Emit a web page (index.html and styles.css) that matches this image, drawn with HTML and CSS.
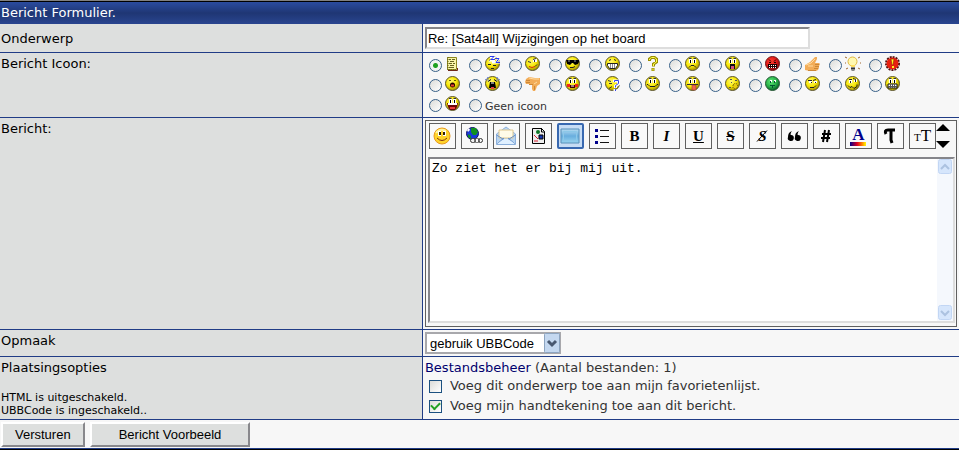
FILE: index.html
```
<!DOCTYPE html>
<html lang="nl">

<head>
    <meta charset="utf-8">
    <meta name="viewport" content="width=device-width, initial-scale=1.0">
    <title>Bericht Formulier</title>
    <link rel="stylesheet" href="styles.css">
</head>

<body>

    <!-- gedeelde vormen voor de smileys -->
    <svg class="defs" aria-hidden="true">
        <defs>
            <radialGradient id="geel" cx="40%" cy="35%" r="65%">
                <stop offset="0" stop-color="#fff870" />
                <stop offset="0.55" stop-color="#f8e808" />
                <stop offset="1" stop-color="#a89400" />
            </radialGradient>
            <radialGradient id="rood" cx="40%" cy="35%" r="65%">
                <stop offset="0" stop-color="#ff4030" />
                <stop offset="0.6" stop-color="#e01818" />
                <stop offset="1" stop-color="#800c10" />
            </radialGradient>
            <radialGradient id="groen" cx="40%" cy="35%" r="65%">
                <stop offset="0" stop-color="#60e878" />
                <stop offset="0.6" stop-color="#28b048" />
                <stop offset="1" stop-color="#086028" />
            </radialGradient>
            <linearGradient id="kleuren">
                <stop offset="0" stop-color="#00008b" />
                <stop offset="0.45" stop-color="#e00020" />
                <stop offset="0.75" stop-color="#ff8000" />
                <stop offset="1" stop-color="#ffff00" />
            </linearGradient>
            <linearGradient id="scherm" x2="0" y2="1">
                <stop offset="0" stop-color="#b8dcf2" />
                <stop offset="0.5" stop-color="#68aede" />
                <stop offset="1" stop-color="#98d4f0" />
            </linearGradient>
            <g id="gezicht">
                <circle cx="7.5" cy="7.5" r="7" fill="url(#geel)" stroke="#5c5630" />
            </g>
            <g id="ogen">
                <path d="M4 3h3v4H4zM8 3h3v4H8z" fill="#fff" />
                <path d="M5 4h1v3H5zM9 4h1v3H9z" fill="#000" />
                <path d="M4 2.5h2.500M8.500 2.500H11" stroke="#333" fill="none" />
            </g>
            <g id="duim">
                <path d="M0 9l5-3 5-5h2v2l-2 4h4l1 1-1 2v2l-1 2-2 1H5l-5-1z" fill="#f2ac58" />
                <path d="M1 9l5-2 4-4M3 10h5" stroke="#ffdca0" fill="none" />
                <path d="M10 8.500h4M10 10.500h4M9 12.500h4M3 14.500h8" stroke="#cc8838" />
            </g>
        </defs>
    </svg>

    <form class="formulier" action="#">
        <h1>Bericht Formulier.</h1>

        <div class="rij">
            <label class="naam midden" for="onderwerp">Onderwerp</label>
            <div class="veld">
                <input type="text" id="onderwerp" class="onderwerp" value="Re: [Sat4all] Wijzigingen op het board">
            </div>
        </div>

        <div class="rij">
            <div class="naam">Bericht Icoon:</div>
            <div class="veld iconen">
                <label><input type="radio" name="icoon" aria-label="Bericht" checked>
                    <svg viewBox="0 0 16 16"><path d="M2.500 1.500h9v12h-9z" fill="#f8f4a8" stroke="#8c8620" /><path d="M3 1v13h9" stroke="#605808" fill="none" stroke-dasharray="1 1" /><path d="M4 3.500h2M7 3.500h3M5 5.500h4M4 7.500h3M8 7.500h2M5 9.500h4M4 11.500h5" stroke="#686420" /><path d="M12.500 12v2.500H3" stroke="#702818" fill="none" /></svg></label>
                <label><input type="radio" name="icoon" aria-label="Slapen">
                    <svg viewBox="0 0 16 16"><use href="#gezicht" /><path d="M3 8.500h3M8 9.500h3M6 12.500h3M4 4.500l2-1" stroke="#222" /><path d="M5 1.500h4L6 4.500h4M10 2.500h4L11 6.500h4M7 6.500h4" fill="none" stroke="#fff" stroke-width="2" /><path d="M5 .5h4L6 3.500h4M10 2.500h4L11 6.500h4" fill="none" stroke="#2838f0" /></svg></label>
                <label><input type="radio" name="icoon" aria-label="Knipoog">
                    <svg viewBox="0 0 16 16"><use href="#gezicht" /><path d="M8 3h4v3H8z" fill="#fff" /><path d="M3 5.500l3 1M8 3.500l3-1M9.500 4v2M10 10.500l2-2" stroke="#333" fill="none" /><path d="M4 10.500l3 1 3-1" stroke="#d03010" fill="none" /></svg></label>
                <label><input type="radio" name="icoon" aria-label="Stoer">
                    <svg viewBox="0 0 16 16"><use href="#gezicht" /><path d="M1 4h13v2l-1 2-3 1-2-2H7L5 9 2 8z" fill="#000" /><path d="M3 5h2M9 5h2" stroke="#999" /><path d="M5 11.500h3l2-1" stroke="#222" fill="none" /></svg></label>
                <label><input type="radio" name="icoon" aria-label="Grijns">
                    <svg viewBox="0 0 16 16"><use href="#gezicht" /><path d="M4 4.500l2-1M9 3.500l2 1" stroke="#222" /><path d="M2.500 7.500h10v2l-2 3h-6l-2-3z" fill="#fff" stroke="#222" /><path d="M5.500 8v4M7.500 8v4M9.500 8v4" stroke="#888" /></svg></label>
                <label><input type="radio" name="icoon" aria-label="Vraag">
                    <svg viewBox="0 0 16 16"><path d="M4.500 5V3l2-1.500h3l2 1.500v3l-3 2v2.500M8 12v3" stroke="#988c00" stroke-width="3" fill="none" /><path d="M4.500 4V3l2-1.500h3l2 1.500v3l-3 2v2M8 12.500v2" stroke="#ffff50" fill="none" /></svg></label>
                <label><input type="radio" name="icoon" aria-label="Droevig">
                    <svg viewBox="0 0 16 16"><use href="#gezicht" /><use href="#ogen" /><path d="M4 11.500l2-2h3l2 2" stroke="#222" fill="none" /></svg></label>
                <label><input type="radio" name="icoon" aria-label="Verbaasd">
                    <svg viewBox="0 0 16 16"><use href="#gezicht" /><use href="#ogen" /><path d="M5 8h5v5H5z" fill="#111" /><path d="M6 10h3v3H6z" fill="#d85080" /></svg></label>
                <label><input type="radio" name="icoon" aria-label="Boos">
                    <svg viewBox="0 0 16 16"><circle cx="7.5" cy="7.5" r="7" fill="url(#rood)" stroke="#701818" /><path d="M4 3.500l2 2M11 3.500l-2 2M4 6.500h2M9 6.500h2" stroke="#200" /><path d="M3 8h9v4H3z" fill="#200" /><path d="M4 9.500h7M4 11.500h7" stroke="#fff" stroke-dasharray="1 1" /></svg></label>
                <label><input type="radio" name="icoon" aria-label="Duim omhoog">
                    <svg viewBox="0 0 16 16"><use href="#duim" /></svg></label>
                <label><input type="radio" name="icoon" aria-label="Idee">
                    <svg viewBox="0 0 16 16"><path d="M0 1l2 1M15 1l-2 1M0 7h1M15 7h1M1 13l2-1M15 13l-2-1" stroke="#a06830" /><circle cx="7.5" cy="5.500" r="4.500" fill="#fff8b0" stroke="#e0b840" /><path d="M6 9h4v2H6z" fill="#ffe060" /><path d="M6 11h4v3l-1 1H7l-1-1z" fill="#888" /><path d="M6 12.500h4" stroke="#333" /></svg></label>
                <label><input type="radio" name="icoon" aria-label="Let op">
                    <svg viewBox="0 0 16 16"><circle cx="7.5" cy="7.5" r="6.500" fill="none" stroke="#501010" stroke-width="2" stroke-dasharray="2 1" /><circle cx="7.5" cy="7.5" r="6" fill="#e82010" /><path d="M6 3h3L8 9H7z" fill="#fff020" stroke="#801000" stroke-width=".5" /><path d="M7 10h2v2H7z" fill="#fff020" /></svg></label>

                <label><input type="radio" name="icoon" aria-label="Oh">
                    <svg viewBox="0 0 16 16"><use href="#gezicht" /><path d="M4 4.500h2M9 4.500h2" stroke="#665c00" /><circle cx="7.5" cy="9" r="2.500" fill="#200" /><path d="M6 9.500h3" stroke="#f04030" stroke-width="2" /></svg></label>
                <label><input type="radio" name="icoon" aria-label="Huilen">
                    <svg viewBox="0 0 16 16"><use href="#gezicht" /><path d="M3 5.500l3-2M12 5.500l-3-2" stroke="#111" /><path d="M5 6h5l1 6H4z" fill="#000" /><path d="M6 7h3" stroke="#fff" /><path d="M6 11h3v2H6z" fill="#e04040" /><path d="M0 4l3-3v5M15 4l-3-3v5" fill="none" stroke="#7088f0" stroke-dasharray="2 1" /></svg></label>
                <label><input type="radio" name="icoon" aria-label="Duim omlaag">
                    <svg viewBox="0 0 16 16"><path d="M1 3l3-2 6 1h5v6l-3 2-1 3-1 2H8l-1-2V9L4 8 1 8 0 6z" fill="#f2ac58" /><path d="M4 2l5 1 5 0M9 8l3-2" stroke="#ffdca0" fill="none" /><path d="M1 4.500h4M1 6.500h4M4 8.500h4M9.500 10v4" stroke="#cc8838" /></svg></label>
                <label><input type="radio" name="icoon" aria-label="Blozen">
                    <svg viewBox="0 0 16 16"><use href="#gezicht" /><use href="#ogen" /><path d="M2 8h3v3H2zM10 8h3v3h-3z" fill="#f02818" /><path d="M5 9h5v3H5z" fill="#400" /><path d="M6 10h3" stroke="#fff" /></svg></label>
                <label><input type="radio" name="icoon" aria-label="Verward">
                    <svg viewBox="0 0 16 16"><use href="#gezicht" /><path d="M3 4.500l3 1M8 5.500h2M4 7.500h3M4 12.500l3-2" stroke="#333" fill="none" /><path d="M9.500 6V5h4v3l-3 2v2M10 13v2" stroke="#fff" stroke-width="3" fill="none" /><path d="M9.500 6V4.500h4v3l-3 2v2M10.500 13v2" stroke="#3848e8" fill="none" /></svg></label>
                <label><input type="radio" name="icoon" aria-label="Glimlach">
                    <svg viewBox="0 0 16 16"><use href="#gezicht" /><use href="#ogen" /><path d="M2 8.500h1l2 2h5l2-2h1" stroke="#222" fill="none" /></svg></label>
                <label><input type="radio" name="icoon" aria-label="Tong">
                    <svg viewBox="0 0 16 16"><use href="#gezicht" /><use href="#ogen" /><path d="M2 8.500h11" stroke="#333" /><path d="M7 9h4v5H7z" fill="#f06850" stroke="#903020" stroke-width=".5" /></svg></label>
                <label><input type="radio" name="icoon" aria-label="Fluisteren">
                    <svg viewBox="0 0 16 16"><use href="#gezicht" /><path d="M5 3.500h2M10 4.500h2M6 6.500h1M4 11.500h2" stroke="#555" /><path d="M8 9l2-2 2 1 1 3-3 2-2-1z" fill="#e8cc10" stroke="#706000" stroke-dasharray="1 1" /></svg></label>
                <label><input type="radio" name="icoon" aria-label="Misselijk">
                    <svg viewBox="0 0 16 16"><circle cx="7.5" cy="7.5" r="7" fill="url(#groen)" stroke="#285838" /><path d="M5 4h2v2H5zM9 4h2v2H9z" fill="#fff" /><path d="M5.500 5v2M9.500 5v2M5 9.500h5M7.500 10v2" stroke="#053" /></svg></label>
                <label><input type="radio" name="icoon" aria-label="Sarcastisch">
                    <svg viewBox="0 0 16 16"><use href="#gezicht" /><path d="M4 5h3v2H4zM9 5h3v2H9z" fill="#fff" /><path d="M3 4.500h4M8 4.500l3-1M6 6.500h1M10 6.500h1M5 11.500h4l2-2" stroke="#222" fill="none" /></svg></label>
                <label><input type="radio" name="icoon" aria-label="Scheef">
                    <svg viewBox="0 0 16 16"><use href="#gezicht" /><path d="M4 4h3v3H4zM9 3h3v3H9z" fill="#fff" /><path d="M4 3.500h3M8 2.500l3 1M5.500 5v2M10.500 4v2M3 9.500l2 2 2-1 2 2 3-2v-2" stroke="#222" fill="none" /></svg></label>
                <label><input type="radio" name="icoon" aria-label="Tanden">
                    <svg viewBox="0 0 16 16"><use href="#gezicht" /><use href="#ogen" /><path d="M3 8h9v4H3z" fill="#fff" stroke="#111" /><path d="M3 10.500h9M5.500 8v4M7.500 8v4M9.500 8v4" stroke="#555" /></svg></label>

                <label><input type="radio" name="icoon" aria-label="Lachen">
                    <svg viewBox="0 0 16 16"><use href="#gezicht" /><use href="#ogen" /><path d="M2 7h11l-1 4-2 3H5L3 11z" fill="#700808" /><path d="M3 8h9" stroke="#fff" stroke-width="2" /><path d="M5 11h5v2H5z" fill="#f04040" /></svg></label>
                <label class="geen"><input type="radio" name="icoon"><span>Geen icoon</span></label>
            </div>
        </div>

        <div class="rij">
            <label class="naam" for="bericht">Bericht:</label>
            <div class="veld">
                <div class="editor">
                    <div class="werkbalk">
                        <button type="button" aria-label="Smiley"><svg viewBox="0 0 20 20"><circle cx="10" cy="10" r="8" fill="#ffd42a" stroke="#e89820" /><path d="M4 7q4-5 10-2" stroke="#fff4a0" stroke-width="2" fill="none" /><path d="M6 5h3v5H6zM11 5h3v5h-3z" fill="#fff" /><path d="M7 6h2v3H7zM11 6h2v3h-2z" fill="#302008" /><path d="M5 12q5 5 10 0" fill="none" stroke="#803010" /></svg></button>
                        <button type="button" aria-label="Link"><svg viewBox="0 0 20 20"><circle cx="8.500" cy="7.500" r="6" fill="#1838d8" stroke="#101060" /><path d="M7 2l5 0 2 4-2 3H9L7 6zM4 8l3 2 0 3-3-2z" fill="#109020" /><path d="M3 4l2-2 1 2-2 2z" fill="#fff" /><rect x="6.500" y="12.500" width="5" height="4" rx="2" fill="#eee" stroke="#333" /><rect x="10.500" y="12.500" width="5" height="4" rx="2" fill="none" stroke="#555" /><rect x="14.500" y="12.500" width="4" height="4" rx="2" fill="none" stroke="#333" /></svg></button>
                        <button type="button" aria-label="E-mail"><svg viewBox="0 0 20 20"><path d="M.5 8L10 1l9.500 7v10.500H.5z" fill="#b8d4f0" stroke="#8cb0dc" /><path d="M3 4h14v8H3z" fill="#fffbe8" stroke="#e0c890" /><path d="M.5 9l8 5h3l8-5M1 18l7-6M19 18l-7-6" fill="none" stroke="#6890c8" /><path d="M1 18l7-5h4l7 5z" fill="#e0f0ff" /></svg></button>
                        <button type="button" aria-label="Afbeelding"><svg viewBox="0 0 20 20"><path d="M4.500 2.500h9l3 3v12h-12z" fill="#eee" stroke="#000" /><path d="M13.500 2v4H17" fill="none" stroke="#000" /><circle cx="10" cy="6" r="2" fill="#107828" /><path d="M11 9h4v4h-4z" fill="#1838b0" stroke="#000" /><path d="M6 9l4 4M6 15h4" stroke="#d82030" /></svg></button>
                        <button type="button" class="actief" aria-label="Flash"><svg viewBox="0 0 20 20"><path d="M1 3h18v14H1z" fill="url(#scherm)" stroke="#5890b8" /><path d="M3.500 5.500h13v9h-13z" fill="none" stroke="#8cc8e8" /></svg></button>
                        <button type="button" aria-label="Lijst"><svg viewBox="0 0 20 20"><path d="M3 3h3v3H3zM3 9h3v3H3zM3 15h3v3H3z" fill="#00008b" /><path d="M8 4.500h9M8 10.500h9M8 16.500h9" stroke="#111" /></svg></button>
                        <button type="button"><b>B</b></button>
                        <button type="button"><b><i>I</i></b></button>
                        <button type="button"><u>U</u></button>
                        <button type="button"><s>S</s></button>
                        <button type="button" class="schuin" aria-label="Schuin"><i>S</i><svg viewBox="0 0 20 20"><path d="M5 15.500L15 4.500" stroke="#000" /></svg></button>
                        <button type="button" aria-label="Citaat"><svg viewBox="0 0 20 20"><path d="M8 5C5 6 4 8 4 11a3 3 0 1 0 3-2c-1 0 0-3 1-4zM15 5c-3 1-4 3-4 6a3 3 0 1 0 3-2c-1 0 0-3 1-4z" fill="#000" /></svg></button>
                        <button type="button" aria-label="Code"><svg viewBox="0 0 20 20"><path d="M9 4L7 16M13 4l-2 12M6 8h9M5 12h9" stroke="#000" stroke-width="2" /></svg></button>
                        <button type="button" class="kleur" aria-label="Kleur"><span>A</span><svg viewBox="0 0 16 4"><path d="M0 0h16v4H0z" fill="url(#kleuren)" /></svg></button>
                        <button type="button" aria-label="Lettertype"><svg viewBox="0 0 20 20"><path d="M6 8Q4 4 8 4h7M11 4v10l1 3" fill="none" stroke="#000" stroke-width="3" /></svg></button>
                        <button type="button" class="grootte"><small>T</small><span>T</span></button>
                        <div class="pijlen">
                            <button type="button" aria-label="Groter"><svg viewBox="0 0 14 7"><path d="M0 7l7-7 7 7z" /></svg></button>
                            <button type="button" aria-label="Kleiner"><svg viewBox="0 0 14 7"><path d="M0 0l7 7 7-7z" /></svg></button>
                        </div>
                    </div>
                    <div class="tekstvak">
                        <textarea id="bericht">Zo ziet het er bij mij uit.</textarea>
                        <div class="schuifbalk">
                            <svg viewBox="0 0 16 16"><rect x="1.500" y=".5" width="13" height="14" rx="2" fill="#d6e6fc" stroke="#c2d6f4" /><path d="M4 10l4-4 4 4" fill="none" stroke="#acc2e0" stroke-width="2" /></svg>
                            <svg viewBox="0 0 16 16"><rect x="1.500" y=".5" width="13" height="14" rx="2" fill="#d6e6fc" stroke="#c2d6f4" /><path d="M4 6l4 4 4-4" fill="none" stroke="#acc2e0" stroke-width="2" /></svg>
                        </div>
                    </div>
                </div>
            </div>
        </div>

        <div class="rij">
            <label class="naam" for="opmaak">Opmaak</label>
            <div class="veld">
                <div class="keuze">
                    <select id="opmaak">
                        <option>gebruik UBBCode</option>
                    </select>
                    <svg viewBox="0 0 16 20"><rect x=".5" y=".5" width="15" height="19" rx="1" fill="#c4d8f0" stroke="#8ca4c0" /><path d="M4 8l4 4 4-4" fill="none" stroke="#485870" stroke-width="3" /></svg>
                </div>
            </div>
        </div>

        <div class="rij">
            <div class="naam">Plaatsingsopties
                <p>HTML is uitgeschakeld.<br>UBBCode is ingeschakeld..</p>
            </div>
            <div class="veld opties">
                <div><a href="#">Bestandsbeheer</a> (Aantal bestanden: 1)</div>
                <label><input type="checkbox">Voeg dit onderwerp toe aan mijn favorietenlijst.</label>
                <label><input type="checkbox" checked>Voeg mijn handtekening toe aan dit bericht.</label>
            </div>
        </div>

        <div class="knoppen">
            <button type="submit">Versturen</button>
            <button type="button">Bericht Voorbeeld</button>
        </div>
    </form>

</body>

</html>
```
FILE: styles.css
```
* {
    box-sizing: border-box;
}

body {
    margin: 0;
    background-color: #f7f7f7;
    color: #333;
    font-family: Verdana, "DejaVu Sans", sans-serif;
    font-size: 13px;
    line-height: 18px;
}

svg {
    display: block;
}

.defs {
    position: absolute;
    width: 0;
    height: 0;
}

.formulier {
    border-top: 1px solid #808080;
    border-bottom: 1px solid #000;
}

h1 {
    margin: 0;
    padding: 2px 1px;
    border-top: 1px solid #000;
    background: linear-gradient(to bottom, #2b4c9f, #1f3674 50%, #29458f);
    color: #fff;
    font-size: 13px;
    font-weight: normal;
}

.rij {
    display: grid;
    grid-template-columns: 44% 1fr;
    border-bottom: 1px solid #203c86;
}

.naam {
    padding: 2px 1px 1px;
    background-color: #dddfde;
    color: #000;
}

.midden {
    display: flex;
    align-items: center;
}

.naam p {
    margin: 14px 0 0;
    font-size: 11px;
    line-height: 13px;
}

.veld {
    padding: 2px;
    border-left: 1px solid #203c86;
}

input,
textarea,
select,
button {
    margin: 0;
    font-family: Arial, "Liberation Sans", sans-serif;
    font-size: 13px;
    color: #000;
}

.onderwerp {
    display: block;
    width: 385px;
    max-width: 100%;
    height: 22px;
    margin: 1px 0;
    padding: 0 1px;
    border: 2px solid;
    border-color: #85858a #ddd #ddd #85858a;
    background-color: #fff;
}

/* iconen */

.iconen {
    display: grid;
    grid-template-columns: repeat(12, 40px);
    grid-auto-rows: 20px;
    padding: 2px 6px;
}

.iconen label {
    display: flex;
    gap: 3px;
}

.iconen svg {
    width: 16px;
    height: 16px;
    margin-top: 1px;
}

.iconen .geen {
    grid-column: span 3;
    font-size: 11px;
    line-height: 24px;
}

input[type="radio"] {
    appearance: none;
    width: 13px;
    height: 13px;
    margin-top: 4px;
    border: 1px solid #386088;
    border-radius: 50%;
    background: linear-gradient(135deg, #dcdcd8, #fff);
}

input[type="radio"]:checked {
    background: radial-gradient(circle, #21a121 2px, #f4f4f2 3px);
}

/* editor */

.editor {
    padding: 2px 1px 3px 2px;
    border: 1px solid #606060;
}

.werkbalk {
    display: flex;
    gap: 5px;
    padding-left: 1px;
    margin-bottom: 8px;
}

.werkbalk > button {
    display: flex;
    flex: none;
    align-items: center;
    justify-content: center;
    width: 27px;
    height: 26px;
    padding: 0;
    border: 1px solid #606060;
    background-color: #f9f9f9;
    font-family: "Liberation Serif", serif;
    font-size: 15px;
    font-weight: bold;
}

.werkbalk > button svg {
    width: 20px;
    height: 20px;
}

.werkbalk .actief {
    border: 2px solid #3868b0;
    border-radius: 2px;
    background-color: #c6dcf4;
}

.werkbalk .schuin svg {
    position: absolute;
}

.werkbalk .kleur {
    flex-direction: column;
    color: #00008b;
    font-size: 17px;
    line-height: 15px;
}

.werkbalk .kleur svg {
    width: 16px;
    height: 4px;
}

.werkbalk .grootte {
    align-items: baseline;
    font-size: 17px;
    font-weight: normal;
    line-height: 24px;
}

.grootte small {
    font-size: 11px;
}

.pijlen {
    display: flex;
    flex-direction: column;
    justify-content: space-between;
    margin-left: -5px;
    padding: 1px 0;
}

.pijlen button {
    padding: 0;
    border: 0;
    background: none;
}

.pijlen svg {
    width: 14px;
    height: 7px;
}

.tekstvak {
    display: flex;
    height: 166px;
    border: 2px solid;
    border-color: #85858a #ddd #ddd #85858a;
    background-color: #fff;
}

textarea {
    flex: 1;
    padding: 2px;
    border: 0;
    outline: 0;
    resize: none;
    background: none;
    font-family: "Courier New", "Liberation Mono", monospace;
    line-height: 16px;
}

.schuifbalk {
    display: flex;
    flex-direction: column;
    justify-content: space-between;
    background-color: #f5f8fd;
}

.schuifbalk svg {
    width: 16px;
    height: 16px;
}

/* opmaak en opties */

.keuze {
    position: relative;
    width: 136px;
}

.keuze select {
    appearance: none;
    display: block;
    width: 100%;
    height: 22px;
    padding: 0 3px;
    border: 2px solid #a8a8ac;
    border-radius: 0;
    background-color: #fff;
}

.keuze svg {
    position: absolute;
    top: 1px;
    right: 1px;
    width: 16px;
    height: 20px;
    pointer-events: none;
}

.opties {
    padding-bottom: 3px;
}

.opties div {
    line-height: 17px;
}

.opties a {
    color: #00006e;
    text-decoration: none;
}

.opties label {
    display: flex;
    align-items: center;
    gap: 8px;
    height: 20px;
    padding-left: 4px;
}

input[type="checkbox"] {
    appearance: none;
    display: grid;
    place-items: center;
    width: 13px;
    height: 13px;
    border: 1px solid #1c5180;
    background: linear-gradient(135deg, #dcdcd8, #fff);
}

input[type="checkbox"]:checked::before {
    content: "";
    width: 7px;
    height: 4px;
    border: solid #21a121;
    border-width: 0 0 2px 2px;
    transform: translateY(-1px) rotate(-45deg);
}

.knoppen {
    display: flex;
    gap: 5px;
    padding: 2px 1px 1px;
    border-bottom: 1px solid #203c86;
}

.knoppen button {
    height: 25px;
    padding: 0 12px;
    border: 2px solid;
    border-color: #fff #88888c #88888c #fff;
    background-color: #dddfde;
}

.knoppen button + button {
    padding: 0 27px;
}
```
